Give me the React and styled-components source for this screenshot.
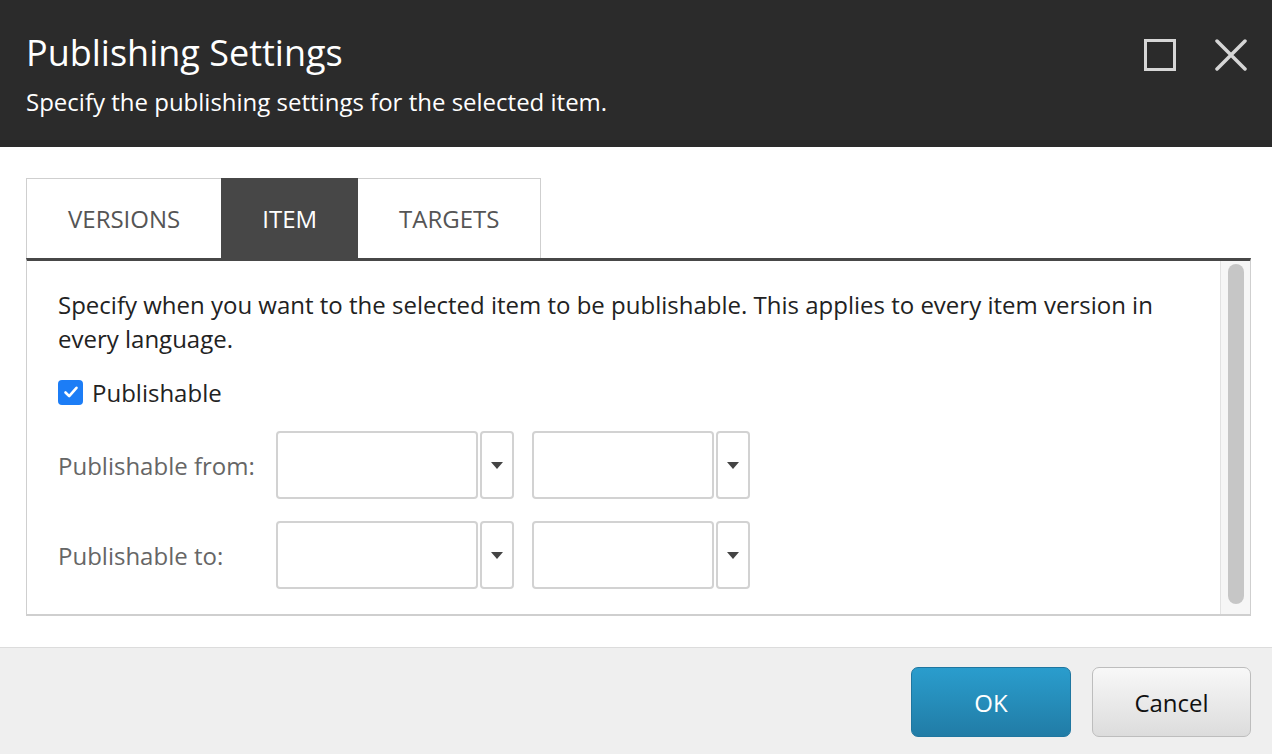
import styled, { createGlobalStyle } from 'styled-components';

/* ──────────────────────────  STYLES  ────────────────────────── */
const GlobalStyle = createGlobalStyle`
  html, body {
    margin: 0;
    padding: 0;
    background: #fff;
  }
  body {
    font-family: "Open Sans", "Liberation Sans", sans-serif;
  }
`;

const Dialog = styled.div`
  width: 1272px;
  height: 754px;
  display: flex;
  flex-direction: column;
  background: #fff;
  overflow: hidden;
`;

const Header = styled.header`
  height: 147px;
  box-sizing: border-box;
  background: #2b2b2b;
  padding: 31px 25px 0 26px;
  display: flex;
  justify-content: space-between;
  align-items: flex-start;
`;

const Titles = styled.div`
  display: flex;
  flex-direction: column;
`;

const Title = styled.h1`
  margin: 0;
  font-size: 36px;
  font-weight: 400;
  line-height: 44px;
  color: #fff;
`;

const Subtitle = styled.p`
  margin: 12px 0 0;
  font-size: 24px;
  line-height: 30px;
  color: #fff;
`;

const WindowControls = styled.div`
  display: flex;
  gap: 39px;
  padding-top: 8px;
`;

const ControlButton = styled.button`
  width: 32px;
  height: 32px;
  padding: 0;
  border: 0;
  background: none;
  display: flex;
  align-items: center;
  justify-content: center;
  color: #d6d6d6;
  cursor: pointer;
`;

const Body = styled.main`
  flex: 1;
  padding: 31px 21px 31px 26px;
  display: flex;
  flex-direction: column;
`;

const TabStrip = styled.div`
  display: flex;
  align-self: flex-start;
  height: 80px;
  box-sizing: border-box;
  border: 1px solid #cfcfcf;
  border-bottom: 0;
`;

const Tab = styled.button`
  border: 0;
  margin: 0;
  padding: 0 ${(p) => p.$pad}px;
  font-family: inherit;
  font-size: 24px;
  text-transform: uppercase;
  background: ${(p) => (p.$active ? '#474747' : '#fff')};
  color: ${(p) => (p.$active ? '#fff' : '#555')};
  cursor: pointer;
  margin-top: ${(p) => (p.$active ? '-1px' : '0')};
`;

const Panel = styled.section`
  flex: 1;
  display: flex;
  border-top: 3px solid #474747;
  border-left: 1px solid #cfcfcf;
  border-right: 1px solid #cfcfcf;
  border-bottom: 2px solid #cfcfcf;
`;

const PanelContent = styled.div`
  flex: 1;
  padding: 27px 40px 0 31px;
`;

const Intro = styled.p`
  margin: 0 0 19px;
  font-size: 24px;
  line-height: 34px;
  color: #222;
`;

const CheckRow = styled.label`
  display: flex;
  align-items: center;
  gap: 9px;
  height: 34px;
  font-size: 24px;
  color: #222;
`;

const CheckBox = styled.span`
  width: 25px;
  height: 25px;
  border-radius: 4px;
  background: #1c7df6;
  display: flex;
  align-items: center;
  justify-content: center;
`;

const FieldGrid = styled.div`
  display: grid;
  grid-template-columns: 218px auto;
  row-gap: 22px;
  margin-top: 22px;
  align-items: center;
`;

const FieldLabel = styled.span`
  font-size: 24px;
  color: #666;
`;

const Pickers = styled.div`
  display: flex;
  gap: 18px;
`;

const Picker = styled.div`
  display: flex;
  gap: 2px;
`;

const PickerInput = styled.input`
  width: ${(p) => p.$width}px;
  height: 68px;
  box-sizing: border-box;
  border: 2px solid #d2d2d2;
  border-radius: 4px;
  background: #fff;
  padding: 0 10px;
  font-family: inherit;
  font-size: 24px;
  outline: none;
`;

const PickerToggle = styled.button`
  width: 34px;
  height: 68px;
  box-sizing: border-box;
  border: 2px solid #d2d2d2;
  border-radius: 4px;
  background: #fff;
  padding: 0;
  display: flex;
  align-items: center;
  justify-content: center;
  cursor: pointer;

  &::after {
    content: '';
    border-left: 6.5px solid transparent;
    border-right: 6.5px solid transparent;
    border-top: 7px solid #444;
  }
`;

const ScrollTrack = styled.div`
  width: 29px;
  background: #f6f6f6;
  border-left: 1px solid #e2e2e2;
  display: flex;
  justify-content: center;
  padding: 3px 0 10px;
`;

const ScrollThumb = styled.div`
  width: 16px;
  background: #c6c6c6;
  border-radius: 8px;
`;

const Footer = styled.footer`
  height: 107px;
  box-sizing: border-box;
  background: #efefef;
  border-top: 1px solid #dcdcdc;
  padding: 19px 21px 0 0;
  display: flex;
  justify-content: flex-end;
  align-items: flex-start;
  gap: 21px;
`;

const ActionButton = styled.button`
  height: 70px;
  min-width: ${(p) => p.$width}px;
  border-radius: 7px;
  font-family: inherit;
  font-size: 24px;
  cursor: pointer;
  border: 1px solid ${(p) => (p.$primary ? '#1f76a0' : '#bdbdbd')};
  color: ${(p) => (p.$primary ? '#fff' : '#111')};
  background: ${(p) =>
    p.$primary
      ? 'linear-gradient(#2a9dcd, #217ca6)'
      : 'linear-gradient(#f8f8f8, #dcdcdc)'};
`;

/* ──────────────────────────  COMPONENT  ────────────────────────── */
const DateTimePicker = ({ width }) => (
  <Picker>
    <PickerInput type="text" $width={width} />
    <PickerToggle aria-label="Open" />
  </Picker>
);

const App = () => {
  const tabs = [
    { label: 'Versions', pad: 41 },
    { label: 'Item', pad: 41, active: true },
    { label: 'Targets', pad: 41 },
  ];

  return (
    <Dialog>
      <GlobalStyle />
      <Header>
        <Titles>
          <Title>Publishing Settings</Title>
          <Subtitle>Specify the publishing settings for the selected item.</Subtitle>
        </Titles>
        <WindowControls>
          <ControlButton aria-label="Maximize">
            <svg width="32" height="32" viewBox="0 0 32 32">
              <rect x="1.5" y="1.5" width="29" height="29" fill="none" stroke="currentColor" strokeWidth="3" />
            </svg>
          </ControlButton>
          <ControlButton aria-label="Close">
            <svg width="32" height="32" viewBox="0 0 32 32">
              <path d="M2 2 L30 30 M30 2 L2 30" stroke="currentColor" strokeWidth="3.5" strokeLinecap="round" />
            </svg>
          </ControlButton>
        </WindowControls>
      </Header>

      <Body>
        <TabStrip>
          {tabs.map((t) => (
            <Tab key={t.label} $pad={t.pad} $active={t.active}>
              {t.label}
            </Tab>
          ))}
        </TabStrip>
        <Panel>
          <PanelContent>
            <Intro>
              Specify when you want to the selected item to be publishable. This applies to every
              item version in every language.
            </Intro>
            <CheckRow>
              <CheckBox>
                <svg width="16" height="16" viewBox="0 0 16 16">
                  <path d="M2.5 8.5 L6.2 12.2 L13.5 3.8" fill="none" stroke="#fff" strokeWidth="2.6" strokeLinecap="round" strokeLinejoin="round" />
                </svg>
              </CheckBox>
              Publishable
            </CheckRow>
            <FieldGrid>
              <FieldLabel>Publishable from:</FieldLabel>
              <Pickers>
                <DateTimePicker width={202} />
                <DateTimePicker width={182} />
              </Pickers>
              <FieldLabel>Publishable to:</FieldLabel>
              <Pickers>
                <DateTimePicker width={202} />
                <DateTimePicker width={182} />
              </Pickers>
            </FieldGrid>
          </PanelContent>
          <ScrollTrack>
            <ScrollThumb />
          </ScrollTrack>
        </Panel>
      </Body>

      <Footer>
        <ActionButton $primary $width={160}>OK</ActionButton>
        <ActionButton $width={159}>Cancel</ActionButton>
      </Footer>
    </Dialog>
  );
};

export default App;
